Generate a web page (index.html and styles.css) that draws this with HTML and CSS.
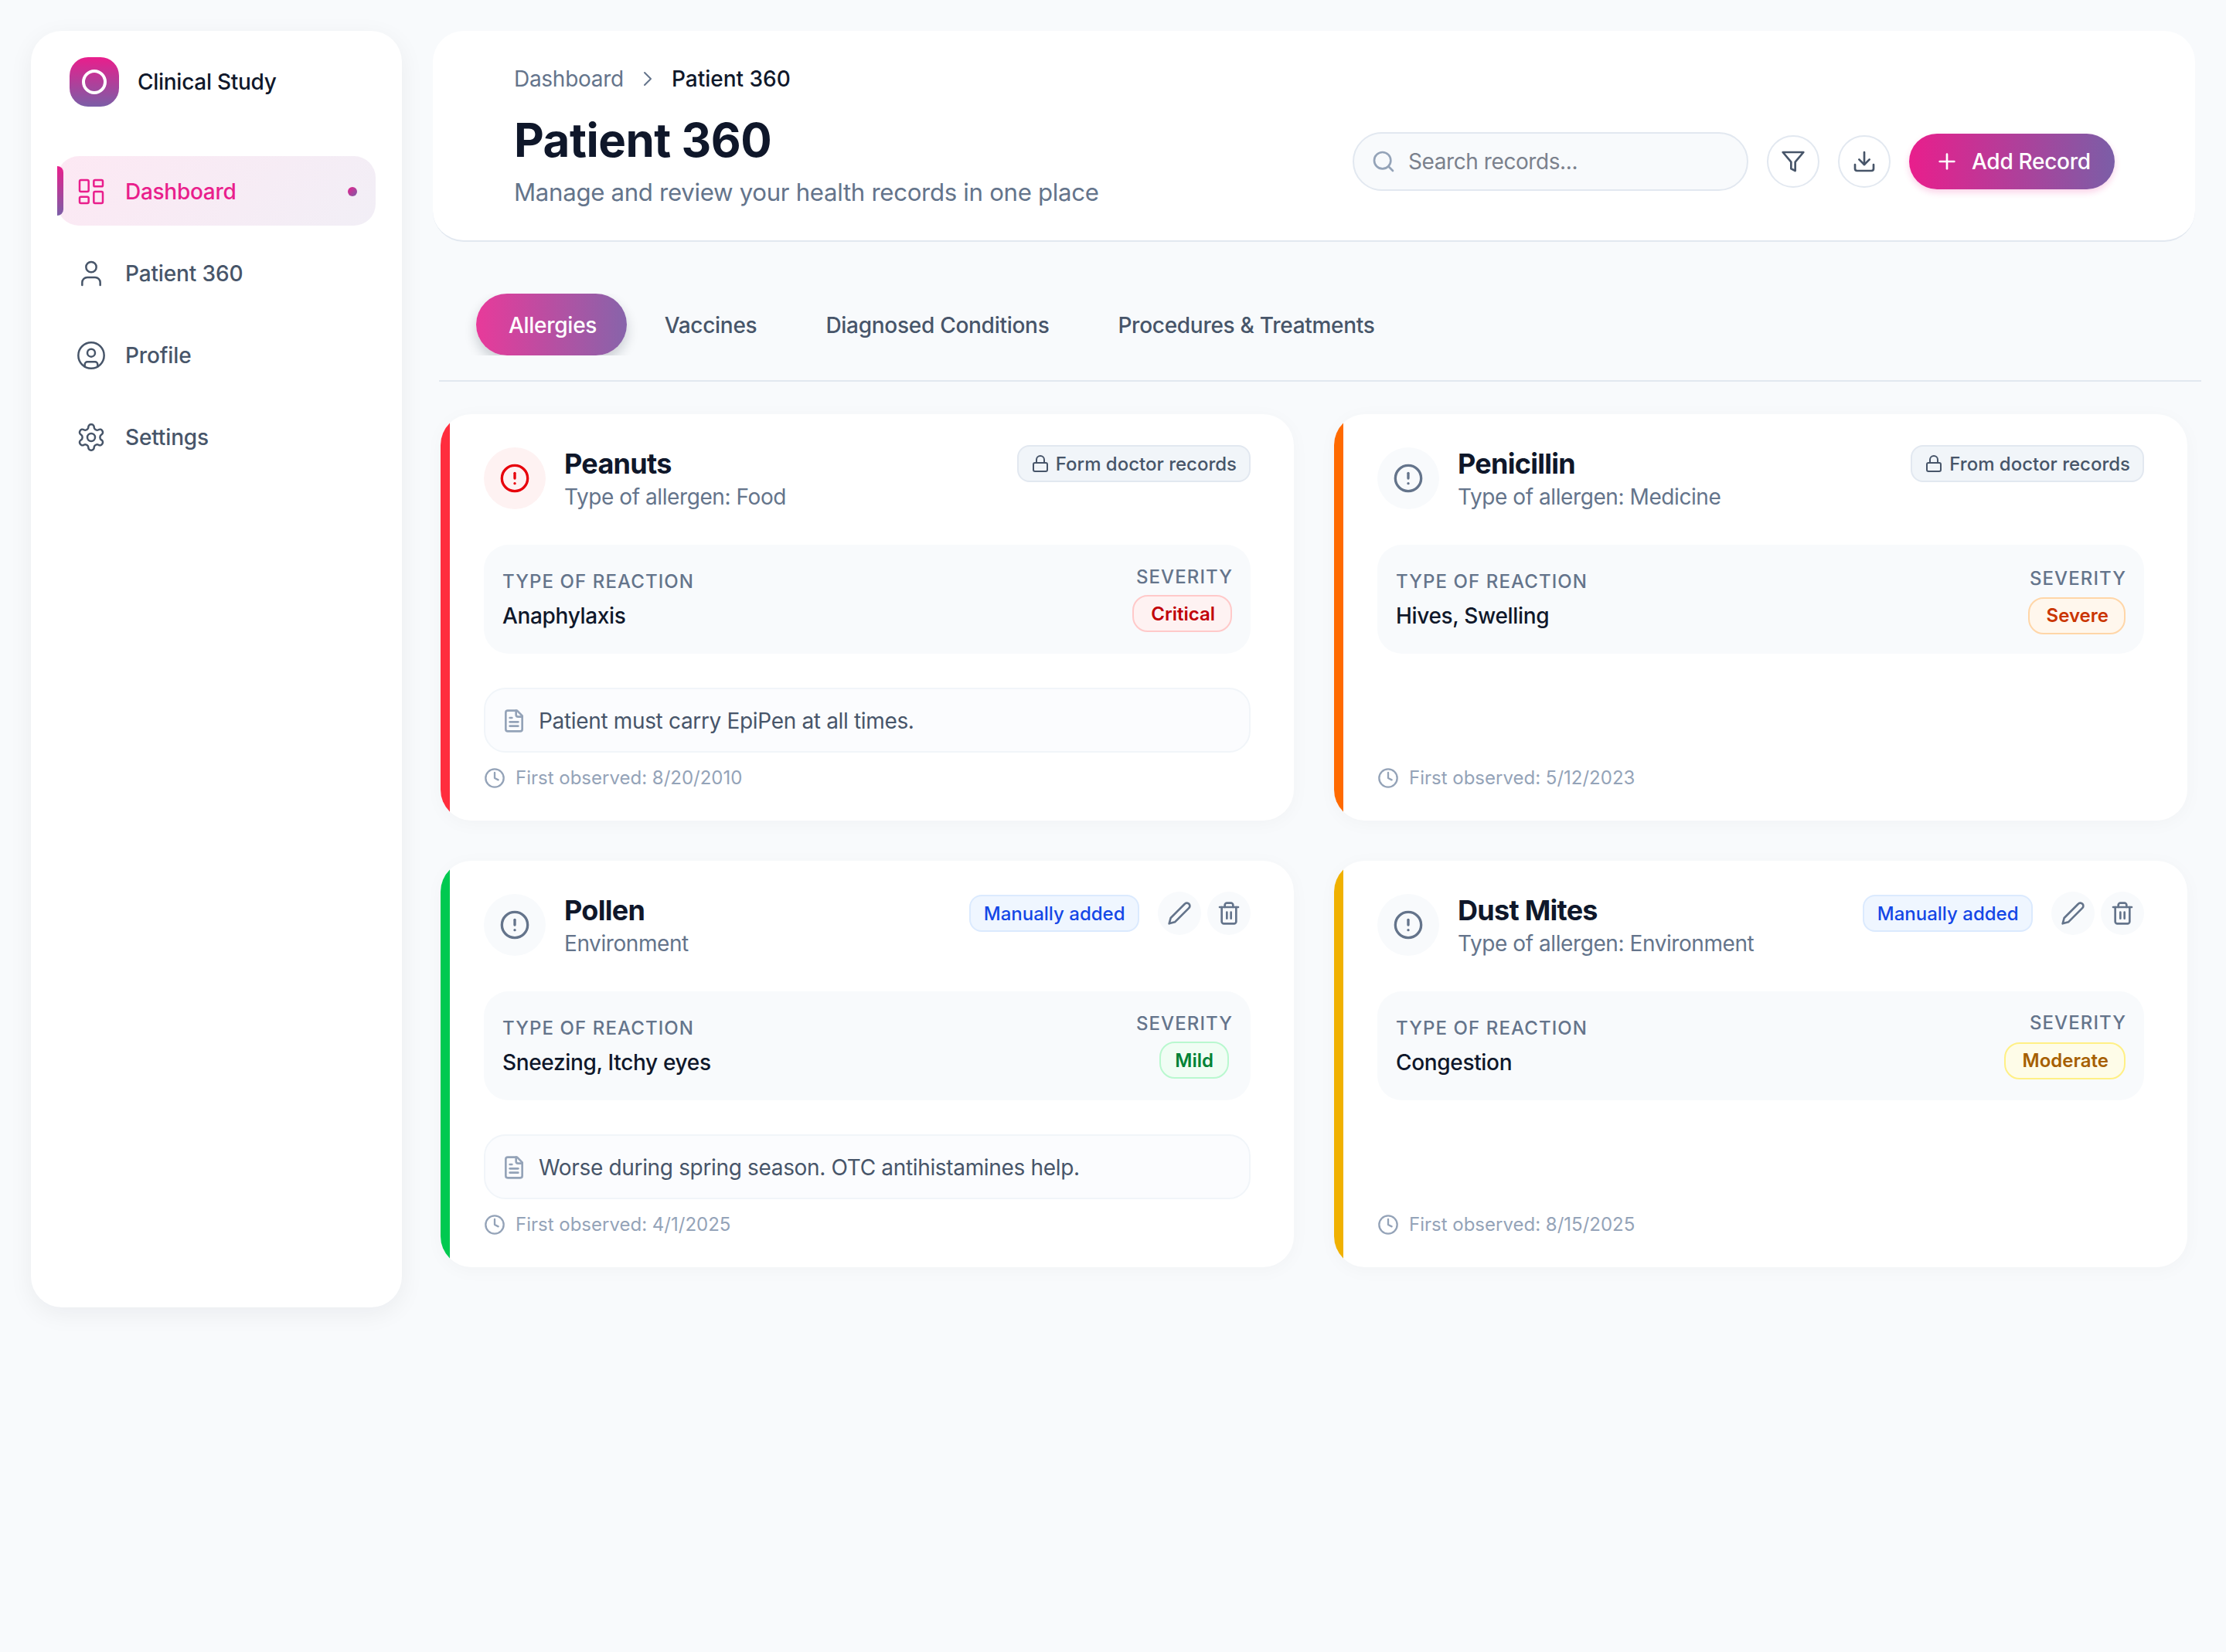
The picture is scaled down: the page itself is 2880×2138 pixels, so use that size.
FILE: index.html
```html
<!DOCTYPE html>
<html lang="en">
<head>
<meta charset="utf-8">
<title>Patient 360</title>
<link rel="stylesheet" href="styles.css">
</head>
<body>
<svg class="sprite" xmlns="http://www.w3.org/2000/svg">
  <symbol id="i-dash" viewBox="0 0 24 24"><rect x="3" y="3" width="7" height="9" rx="1"/><rect x="14" y="3" width="7" height="5" rx="1"/><rect x="14" y="12" width="7" height="9" rx="1"/><rect x="3" y="16" width="7" height="5" rx="1"/></symbol>
  <symbol id="i-user" viewBox="0 0 24 24"><path d="M19 21v-2a4 4 0 0 0-4-4H9a4 4 0 0 0-4 4v2"/><circle cx="12" cy="7" r="4"/></symbol>
  <symbol id="i-profile" viewBox="0 0 24 24"><circle cx="12" cy="12" r="10"/><circle cx="12" cy="10" r="3"/><path d="M7 20.662V19a2 2 0 0 1 2-2h6a2 2 0 0 1 2 2v1.662"/></symbol>
  <symbol id="i-gear" viewBox="0 0 24 24"><path d="M12.22 2h-.44a2 2 0 0 0-2 2v.18a2 2 0 0 1-1 1.73l-.43.25a2 2 0 0 1-2 0l-.15-.08a2 2 0 0 0-2.73.73l-.22.38a2 2 0 0 0 .73 2.73l.15.1a2 2 0 0 1 1 1.72v.51a2 2 0 0 1-1 1.74l-.15.09a2 2 0 0 0-.73 2.73l.22.38a2 2 0 0 0 2.73.73l.15-.08a2 2 0 0 1 2 0l.43.25a2 2 0 0 1 1 1.73V20a2 2 0 0 0 2 2h.44a2 2 0 0 0 2-2v-.18a2 2 0 0 1 1-1.73l.43-.25a2 2 0 0 1 2 0l.15.08a2 2 0 0 0 2.73-.73l.22-.39a2 2 0 0 0-.73-2.73l-.15-.08a2 2 0 0 1-1-1.74v-.5a2 2 0 0 1 1-1.74l.15-.09a2 2 0 0 0 .73-2.73l-.22-.38a2 2 0 0 0-2.73-.73l-.15.08a2 2 0 0 1-2 0l-.43-.25a2 2 0 0 1-1-1.73V4a2 2 0 0 0-2-2z"/><circle cx="12" cy="12" r="3"/></symbol>
  <symbol id="i-chevron" viewBox="0 0 24 24"><path d="m9 18 6-6-6-6"/></symbol>
  <symbol id="i-search" viewBox="0 0 24 24"><circle cx="11" cy="11" r="8"/><path d="m21 21-4.3-4.3"/></symbol>
  <symbol id="i-filter" viewBox="0 0 24 24"><polygon points="22 3 2 3 10 12.46 10 19 14 21 14 12.46 22 3"/></symbol>
  <symbol id="i-download" viewBox="0 0 24 24"><path d="M21 15v4a2 2 0 0 1-2 2H5a2 2 0 0 1-2-2v-4"/><polyline points="7 10 12 15 17 10"/><line x1="12" y1="15" x2="12" y2="3"/></symbol>
  <symbol id="i-plus" viewBox="0 0 24 24"><path d="M5 12h14"/><path d="M12 5v14"/></symbol>
  <symbol id="i-alert" viewBox="0 0 24 24"><circle cx="12" cy="12" r="10"/><line x1="12" y1="8" x2="12" y2="12"/><line x1="12" y1="16" x2="12.01" y2="16"/></symbol>
  <symbol id="i-lock" viewBox="0 0 24 24"><rect x="3" y="11" width="18" height="11" rx="2"/><path d="M7 11V7a5 5 0 0 1 10 0v4"/></symbol>
  <symbol id="i-file" viewBox="0 0 24 24"><path d="M15 2H6a2 2 0 0 0-2 2v16a2 2 0 0 0 2 2h12a2 2 0 0 0 2-2V7Z"/><path d="M14 2v4a2 2 0 0 0 2 2h4"/><path d="M10 9H8"/><path d="M16 13H8"/><path d="M16 17H8"/></symbol>
  <symbol id="i-clock" viewBox="0 0 24 24"><circle cx="12" cy="12" r="10"/><polyline points="12 6 12 12 16 14"/></symbol>
  <symbol id="i-pencil" viewBox="0 0 24 24"><path d="M17 3a2.85 2.83 0 1 1 4 4L7.5 20.5 2 22l1.5-5.5Z"/></symbol>
  <symbol id="i-trash" viewBox="0 0 24 24"><path d="M3 6h18"/><path d="M19 6v14c0 1-1 2-2 2H7c-1 0-2-1-2-2V6"/><path d="M8 6V4c0-1 1-2 2-2h4c1 0 2 1 2 2v2"/><line x1="10" y1="11" x2="10" y2="17"/><line x1="14" y1="11" x2="14" y2="17"/></symbol>
</svg>

<div class="app">
  <aside class="sidebar">
    <div class="brand">
      <div class="logo"><span class="logo-ring"></span></div>
      <span class="brand-name">Clinical Study</span>
    </div>
    <nav class="nav">
      <a class="nav-item active"><span class="nav-bar"></span><svg class="icon nav-icon"><use href="#i-dash"/></svg><span>Dashboard</span><span class="nav-dot"></span></a>
      <a class="nav-item"><svg class="icon nav-icon"><use href="#i-user"/></svg><span>Patient 360</span></a>
      <a class="nav-item"><svg class="icon nav-icon"><use href="#i-profile"/></svg><span>Profile</span></a>
      <a class="nav-item"><svg class="icon nav-icon"><use href="#i-gear"/></svg><span>Settings</span></a>
    </nav>
  </aside>

  <main class="main">
    <header class="header">
      <div class="header-text">
        <div class="crumbs"><span class="crumb">Dashboard</span><svg class="icon crumb-sep"><use href="#i-chevron"/></svg><span class="crumb-current">Patient 360</span></div>
        <h1 class="title">Patient 360</h1>
        <p class="subtitle">Manage and review your health records in one place</p>
      </div>
      <div class="toolbar">
        <div class="search"><svg class="icon search-icon"><use href="#i-search"/></svg><span class="search-text">Search records...</span></div>
        <button class="round-btn"><svg class="icon round-icon"><use href="#i-filter"/></svg></button>
        <button class="round-btn"><svg class="icon round-icon"><use href="#i-download"/></svg></button>
        <button class="add-btn"><svg class="icon add-icon"><use href="#i-plus"/></svg><span>Add Record</span></button>
      </div>
    </header>

    <div class="tabs">
      <div class="tab-list">
        <span class="tab active">Allergies</span>
        <span class="tab">Vaccines</span>
        <span class="tab">Diagnosed Conditions</span>
        <span class="tab">Procedures &amp; Treatments</span>
      </div>
    </div>

    <section class="grid">
      <article class="card">
        <span class="strip strip-red"></span>
        <div class="card-top">
          <div class="card-id">
            <div class="alert-circle alert-red"><svg class="icon alert-icon"><use href="#i-alert"/></svg></div>
            <div><div class="card-name">Peanuts</div><div class="card-sub">Type of allergen: Food</div></div>
          </div>
          <div class="card-tools"><span class="source"><svg class="icon source-icon"><use href="#i-lock"/></svg>Form doctor records</span></div>
        </div>
        <div class="reaction">
          <div><div class="label">TYPE OF REACTION</div><div class="value">Anaphylaxis</div></div>
          <div class="sev"><div class="label">SEVERITY</div><span class="pill pill-critical">Critical</span></div>
        </div>
        <div class="note"><svg class="icon note-icon"><use href="#i-file"/></svg><span>Patient must carry EpiPen at all times.</span></div>
        <div class="observed"><svg class="icon observed-icon"><use href="#i-clock"/></svg><span>First observed: 8/20/2010</span></div>
      </article>

      <article class="card">
        <span class="strip strip-orange"></span>
        <div class="card-top">
          <div class="card-id">
            <div class="alert-circle"><svg class="icon alert-icon"><use href="#i-alert"/></svg></div>
            <div><div class="card-name">Penicillin</div><div class="card-sub">Type of allergen: Medicine</div></div>
          </div>
          <div class="card-tools"><span class="source"><svg class="icon source-icon"><use href="#i-lock"/></svg>From doctor records</span></div>
        </div>
        <div class="reaction">
          <div><div class="label">TYPE OF REACTION</div><div class="value">Hives, Swelling</div></div>
          <div class="sev sev-low"><div class="label">SEVERITY</div><span class="pill pill-severe">Severe</span></div>
        </div>
        <div class="observed"><svg class="icon observed-icon"><use href="#i-clock"/></svg><span>First observed: 5/12/2023</span></div>
      </article>

      <article class="card">
        <span class="strip strip-green"></span>
        <div class="card-top">
          <div class="card-id">
            <div class="alert-circle"><svg class="icon alert-icon"><use href="#i-alert"/></svg></div>
            <div><div class="card-name">Pollen</div><div class="card-sub">Environment</div></div>
          </div>
          <div class="card-tools"><span class="manual">Manually added</span><button class="tool"><svg class="icon tool-icon"><use href="#i-pencil"/></svg></button><button class="tool"><svg class="icon tool-icon"><use href="#i-trash"/></svg></button></div>
        </div>
        <div class="reaction">
          <div><div class="label">TYPE OF REACTION</div><div class="value">Sneezing, Itchy eyes</div></div>
          <div class="sev"><div class="label">SEVERITY</div><span class="pill pill-mild">Mild</span></div>
        </div>
        <div class="note"><svg class="icon note-icon"><use href="#i-file"/></svg><span>Worse during spring season. OTC antihistamines help.</span></div>
        <div class="observed"><svg class="icon observed-icon"><use href="#i-clock"/></svg><span>First observed: 4/1/2025</span></div>
      </article>

      <article class="card">
        <span class="strip strip-yellow"></span>
        <div class="card-top">
          <div class="card-id">
            <div class="alert-circle"><svg class="icon alert-icon"><use href="#i-alert"/></svg></div>
            <div><div class="card-name">Dust Mites</div><div class="card-sub">Type of allergen: Environment</div></div>
          </div>
          <div class="card-tools"><span class="manual">Manually added</span><button class="tool"><svg class="icon tool-icon"><use href="#i-pencil"/></svg></button><button class="tool"><svg class="icon tool-icon"><use href="#i-trash"/></svg></button></div>
        </div>
        <div class="reaction">
          <div><div class="label">TYPE OF REACTION</div><div class="value">Congestion</div></div>
          <div class="sev sev-wide"><div class="label">SEVERITY</div><span class="pill pill-moderate">Moderate</span></div>
        </div>
        <div class="observed"><svg class="icon observed-icon"><use href="#i-clock"/></svg><span>First observed: 8/15/2025</span></div>
      </article>
    </section>
  </main>
</div>
</body>
</html>
```
FILE: styles.css
```css
* { box-sizing: border-box; }
html, body { margin: 0; padding: 0; }
body {
  background: #f8fafc;
  font-family: "Inter", "Liberation Sans", sans-serif;
  color: #0f172a;
  min-height: 2138px;
  overflow: hidden;
}
.sprite { display: none; }
.icon {
  display: block;
  flex: none;
  fill: none;
  stroke: currentColor;
  stroke-width: 2;
  stroke-linecap: round;
  stroke-linejoin: round;
}
.app { display: flex; align-items: flex-start; gap: 40px; padding: 40px; }

/* Sidebar */
.sidebar {
  width: 480px;
  height: 1652px;
  flex: none;
  background: #fff;
  border-radius: 40px;
  padding: 34px;
  box-shadow: 0 8px 32px rgba(15, 23, 42, 0.06);
}
.brand { display: flex; align-items: center; gap: 24px; padding-left: 16px; margin-bottom: 64px; }
.logo {
  width: 64px; height: 64px;
  border-radius: 24px;
  background: linear-gradient(180deg, #e91e8c, #7b5ea7);
  display: flex; align-items: center; justify-content: center;
}
.logo-ring { width: 32px; height: 32px; border-radius: 50%; border: 4px solid #fff; }
.brand-name { font-size: 28px; font-weight: 500; letter-spacing: -0.01em; color: #0f172a; }
.nav { display: flex; flex-direction: column; gap: 16px; }
.nav-item {
  position: relative;
  height: 90px;
  display: flex; align-items: center; gap: 24px;
  padding: 1px 24px 0;
  border-radius: 28px;
  font-size: 28px; font-weight: 500; letter-spacing: -0.005em;
  color: #475569;
}
.nav-item.active {
  color: #e91e8c;
  letter-spacing: -0.01em;
  background: linear-gradient(135deg, rgba(233,30,140,.1), rgba(123,94,167,.1));
}
.nav-icon { width: 40px; height: 40px; stroke-width: 1.5; }
.nav-bar {
  position: absolute; left: 0; top: 13px;
  width: 8px; height: 64px;
  border-radius: 0 8px 8px 0;
  background: linear-gradient(180deg, #e91e8c, #7b5ea7);
}
.nav-dot {
  margin-left: auto;
  width: 12px; height: 12px;
  border-radius: 50%;
  background: linear-gradient(135deg, #e91e8c, #7b5ea7);
}

/* Main */
.main { flex: 1; min-width: 0; }
.header {
  height: 273px;
  background: #fff;
  border-radius: 40px;
  border-bottom: 2px solid #e2e8f0;
  padding: 40px 104px 38px 105px;
  display: flex; justify-content: space-between; align-items: flex-end;
}
.crumbs { display: flex; align-items: center; gap: 15px; font-size: 28px; line-height: 38px; letter-spacing: -0.01em; }
.crumb { color: #64748b; }
.crumb-sep { width: 32px; height: 32px; color: #64748b; stroke-width: 1.5; }
.crumb-current { color: #0f172a; font-weight: 500; letter-spacing: 0; }
.title { margin: 24px 0 8px; font-size: 60px; line-height: 72px; font-weight: 700; letter-spacing: -0.5px; color: #0f172a; }
.subtitle { margin: 0; font-size: 31.2px; line-height: 48px; letter-spacing: -0.01em; color: #64748b; }
.toolbar { display: flex; align-items: center; gap: 24px; margin-bottom: 26px; }
.search {
  width: 512px; height: 76px;
  display: flex; align-items: center; gap: 16px;
  padding-left: 22px;
  background: #f8fafc;
  border: 2px solid #e2e8f0;
  border-radius: 38px;
}
.search-icon { width: 32px; height: 32px; color: #94a3b8; stroke-width: 2; }
.search-text { font-size: 28px; letter-spacing: -0.015em; color: #7b818d; }
.round-btn {
  width: 68px; height: 68px;
  padding: 0;
  display: flex; align-items: center; justify-content: center;
  background: #fff;
  border: 2px solid #e2e8f0;
  border-radius: 50%;
  color: #475569;
}
.round-icon { width: 32px; height: 32px; }
.add-btn {
  width: 266px; height: 72px;
  padding: 0 0 0 33px;
  display: flex; align-items: center; gap: 16px;
  border: 0;
  border-radius: 36px;
  background: linear-gradient(90deg, #e91e8c, #7b5ea7);
  box-shadow: 0 4px 8px rgba(233, 30, 140, 0.2);
  color: #fff;
  font: 500 28px "Inter", sans-serif;
  letter-spacing: -0.01em;
}
.add-icon { width: 32px; height: 32px; }

/* Tabs */
.tabs {
  margin: 67px -8px 42px 8px;
  padding-bottom: 32px;
  border-bottom: 2px solid #e2e8f0;
}
.tab-list { display: flex; gap: 8px; height: 80px; padding-left: 48px; overflow: hidden; }
.tab {
  height: 80px;
  display: flex; align-items: center;
  padding: 2px 40.5px 0;
  border-radius: 40px;
  font-size: 28px; font-weight: 500; letter-spacing: -0.01em;
  color: #475569;
}
.tab.active {
  padding-left: 42px;
  padding-right: 39px;
  color: #fff;
  background: linear-gradient(90deg, #e83a9a, #8764aa);
  box-shadow: 0 8px 16px rgba(15, 23, 42, 0.2);
}

/* Cards */
.grid { display: grid; grid-template-columns: 1104px 1104px; gap: 52px; margin: 0 10px; }
.card {
  position: relative;
  height: 526px;
  display: flex; flex-direction: column;
  padding: 40px 56px 0;
  background: #fff;
  border-radius: 40px;
  overflow: hidden;
  box-shadow: 0 4px 24px rgba(15, 23, 42, 0.03);
}
.strip { position: absolute; left: 0; top: 0; bottom: 0; width: 12px; }
.strip-red { background: #ff2d3d; }
.strip-orange { background: #ff6a00; }
.strip-green { background: #00c950; }
.strip-yellow { background: #f0b100; }
.card-top { display: flex; justify-content: space-between; align-items: flex-start; height: 86px; margin-bottom: 43px; }
.card-id { display: flex; align-items: center; gap: 24px; }
.alert-circle {
  width: 80px; height: 80px;
  border-radius: 50%;
  background: #f8fafc;
  color: #64748b;
  display: flex; align-items: center; justify-content: center;
}
.alert-red { background: #fef2f2; color: #e7000b; }
.alert-icon { width: 40px; height: 40px; }
.card-name { font-size: 36px; line-height: 48px; font-weight: 700; letter-spacing: -0.02em; color: #0f172a; }
.card-sub { font-size: 28px; line-height: 38px; letter-spacing: -0.015em; color: #64748b; }
.card-tools { display: flex; align-items: center; gap: 8px; min-height: 48px; }
.source {
  height: 48px;
  display: flex; align-items: center; gap: 8px;
  padding: 0 16px;
  background: #f1f5f9;
  border: 2px solid #e2e8f0;
  border-radius: 16px;
  font-size: 24px; font-weight: 500;
  color: #475569;
}
.source-icon { width: 24px; height: 24px; }
.manual {
  height: 48px;
  display: flex; align-items: center;
  padding: 0 16.5px;
  margin-right: 16px;
  background: #eff6ff;
  border: 2px solid #dbeafe;
  border-radius: 16px;
  font-size: 24px; font-weight: 500;
  color: #1447e6;
}
.tool {
  width: 56px; height: 56px;
  padding: 0;
  display: flex; align-items: center; justify-content: center;
  background: #f8fafc;
  border: 0;
  border-radius: 50%;
  color: #64748b;
}
.tool-icon { width: 32px; height: 32px; }
.reaction {
  height: 141px;
  display: flex; justify-content: space-between; align-items: center;
  padding: 0 24px;
  background: #f8fafc;
  border-radius: 32px;
}
.label { font-size: 24px; line-height: 36px; font-weight: 500; letter-spacing: 1.1px; color: #64748b; }
.value { margin-top: 6px; font-size: 28px; line-height: 40px; font-weight: 500; letter-spacing: -0.012em; color: #0f172a; }
.sev { display: flex; flex-direction: column; align-items: flex-end; gap: 5px; margin-bottom: 4px; }
.sev .label { margin-right: -1px; }
.sev-low { gap: 6px; margin-bottom: 0; }
.sev-wide { gap: 7px; margin-bottom: 5px; }
.pill {
  height: 48px;
  display: flex; align-items: center;
  padding: 0 20px 0 22px;
  border: 2px solid;
  border-radius: 20px;
  font-size: 24px; font-weight: 600;
}
.pill-critical { background: #fef2f2; border-color: #ffc9c9; color: #c10007; }
.pill-severe { background: #fff7ed; border-color: #ffd6a8; color: #ca3500; }
.pill-mild { background: #f0fdf4; border-color: #b9f8cf; color: #008236; margin-right: 4px; padding: 0 18px; }
.pill-moderate { background: #fefce8; border-color: #fff085; color: #a65f00; }
.note {
  height: 84px;
  margin-top: 44px;
  display: flex; align-items: center; gap: 16px;
  padding: 1px 21px 0;
  background: #fbfcfe;
  border: 2px solid #f1f5f9;
  border-radius: 28px;
  font-size: 28px; letter-spacing: -0.012em;
  color: #475569;
}
.note-icon { width: 32px; height: 32px; color: #94a3b8; }
.observed {
  margin-top: auto;
  margin-bottom: 37px;
  display: flex; align-items: center; gap: 13px;
  font-size: 24px; line-height: 36px;
  color: #94a3b8;
}
.observed-icon { width: 28px; height: 28px; }
```
